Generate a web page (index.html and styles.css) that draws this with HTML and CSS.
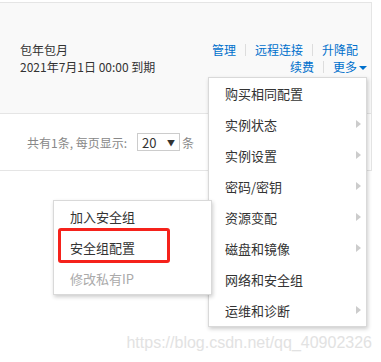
FILE: index.html
```html
<!DOCTYPE html>
<html lang="zh-CN">
<head>
    <meta charset="UTF-8">
    <meta name="viewport" content="width=device-width, initial-scale=1.0">
    <title>实例列表</title>
    <link rel="stylesheet" href="styles.css">
</head>
<body>
    <div class="table">
        <div class="row row-instance">
            <div class="billing">
                <div>包年包月</div>
                <div>2021年7月1日 00:00 到期</div>
            </div>
            <div class="actions">
                <div class="action-line first">
                    <a href="#">管理</a><span class="sep"></span><a href="#">远程连接</a><span class="sep"></span><a href="#">升降配</a>
                </div>
                <div class="action-line">
                    <a href="#">续费</a><span class="sep"></span><a href="#" class="more">更多<i class="caret"></i></a>
                </div>

                <ul class="dropdown">
                    <li>购买相同配置</li>
                    <li class="has-sub">实例状态</li>
                    <li class="has-sub">实例设置</li>
                    <li class="has-sub">密码/密钥</li>
                    <li class="has-sub">资源变配</li>
                    <li class="has-sub">磁盘和镜像</li>
                    <li>网络和安全组</li>
                    <li class="has-sub">运维和诊断</li>

                    <ul class="submenu">
                        <li>加入安全组</li>
                        <li>安全组配置</li>
                        <li class="disabled">修改私有IP</li>
                        <span class="highlight"></span>
                    </ul>
                </ul>
            </div>
        </div>
        <div class="row row-pager">
            <span>共有1条, 每页显示:</span>
            <span class="page-size">20<i class="select-arrow">▼</i></span>
            <span>条</span>
        </div>
    </div>

    <div class="watermark">https://blog.csdn.net/qq_40902326</div>
</body>
</html>
```

FILE: styles.css
```css
body {
    margin: 0;
    padding-top: 2px;
    font-family: "Microsoft YaHei", "Noto Sans CJK SC", sans-serif;
    font-size: 12px;
    color: #333;
    background: #fff;
    height: 360px;
    overflow: hidden;
    position: relative;
}
.table {
    width: 372px;
    border-top: 1px solid #e5e5e5;
    border-right: 1px solid #e5e5e5;
    box-sizing: border-box;
}
.row {
    display: flex;
    align-items: center;
    border-bottom: 1px solid #e5e5e5;
    box-sizing: border-box;
}
.row-instance {
    height: 111px;
    background: #f9f9f9;
    justify-content: space-between;
    padding: 0 4px 0 20px;
}
.billing {
    line-height: 17px;
}
.actions {
    position: relative;
    text-align: right;
    line-height: 17px;
}
.action-line.first {
    margin-right: 9px;
}
.actions a {
    color: #0070cc;
    text-decoration: none;
}
.sep {
    display: inline-block;
    width: 1px;
    height: 12px;
    background: #ddd;
    margin: 0 9px;
    vertical-align: -1px;
}
.caret {
    display: inline-block;
    width: 0;
    height: 0;
    margin-left: 2px;
    border-left: 4px solid transparent;
    border-right: 4px solid transparent;
    border-top: 4px solid #0070cc;
    vertical-align: 2px;
}
.row-pager {
    height: 57px;
    padding-left: 27px;
    color: #888;
    gap: 3px;
}
.page-size {
    display: inline-flex;
    align-items: center;
    justify-content: space-between;
    width: 43px;
    height: 18px;
    box-sizing: border-box;
    border: 1px solid #ccc;
    padding: 0 4px;
    color: #333;
    font-size: 13px;
    margin-left: 7px;
    margin-right: -1px;
}
.select-arrow {
    font-style: normal;
    font-size: 8px;
    color: #333;
}
.dropdown {
    position: absolute;
    top: 36px;
    right: 0;
    width: 157px;
    margin: 0;
    padding: 0;
    list-style: none;
    background: #fff;
    border: 1px solid #d9d9d9;
    box-shadow: 1px 2px 4px rgba(0, 0, 0, 0.2);
    text-align: left;
    font-size: 13px;
    color: #333;
    z-index: 10;
}
.dropdown li {
    position: relative;
    height: 31px;
    line-height: 31px;
    padding-left: 16px;
}
.dropdown li.has-sub::after {
    content: "";
    position: absolute;
    right: 5px;
    top: 11px;
    border-top: 4.5px solid transparent;
    border-bottom: 4.5px solid transparent;
    border-left: 5px solid #ccc;
}
.submenu {
    position: absolute;
    top: 122px;
    left: -156px;
    width: 157px;
    margin: 0;
    padding: 0;
    list-style: none;
    background: #fff;
    border: 1px solid #d9d9d9;
    box-shadow: 1px 2px 4px rgba(0, 0, 0, 0.2);
}
.submenu li.disabled {
    color: #aaa;
}
.highlight {
    position: absolute;
    left: 4px;
    top: 27px;
    width: 112px;
    height: 35px;
    box-sizing: border-box;
    border: 3px solid #f5221b;
    border-radius: 3px;
}
.watermark {
    position: absolute;
    right: 9px;
    top: 334px;
    font-family: "Liberation Sans", Arial, sans-serif;
    font-size: 16px;
    color: #e2e2e2;
}
```
